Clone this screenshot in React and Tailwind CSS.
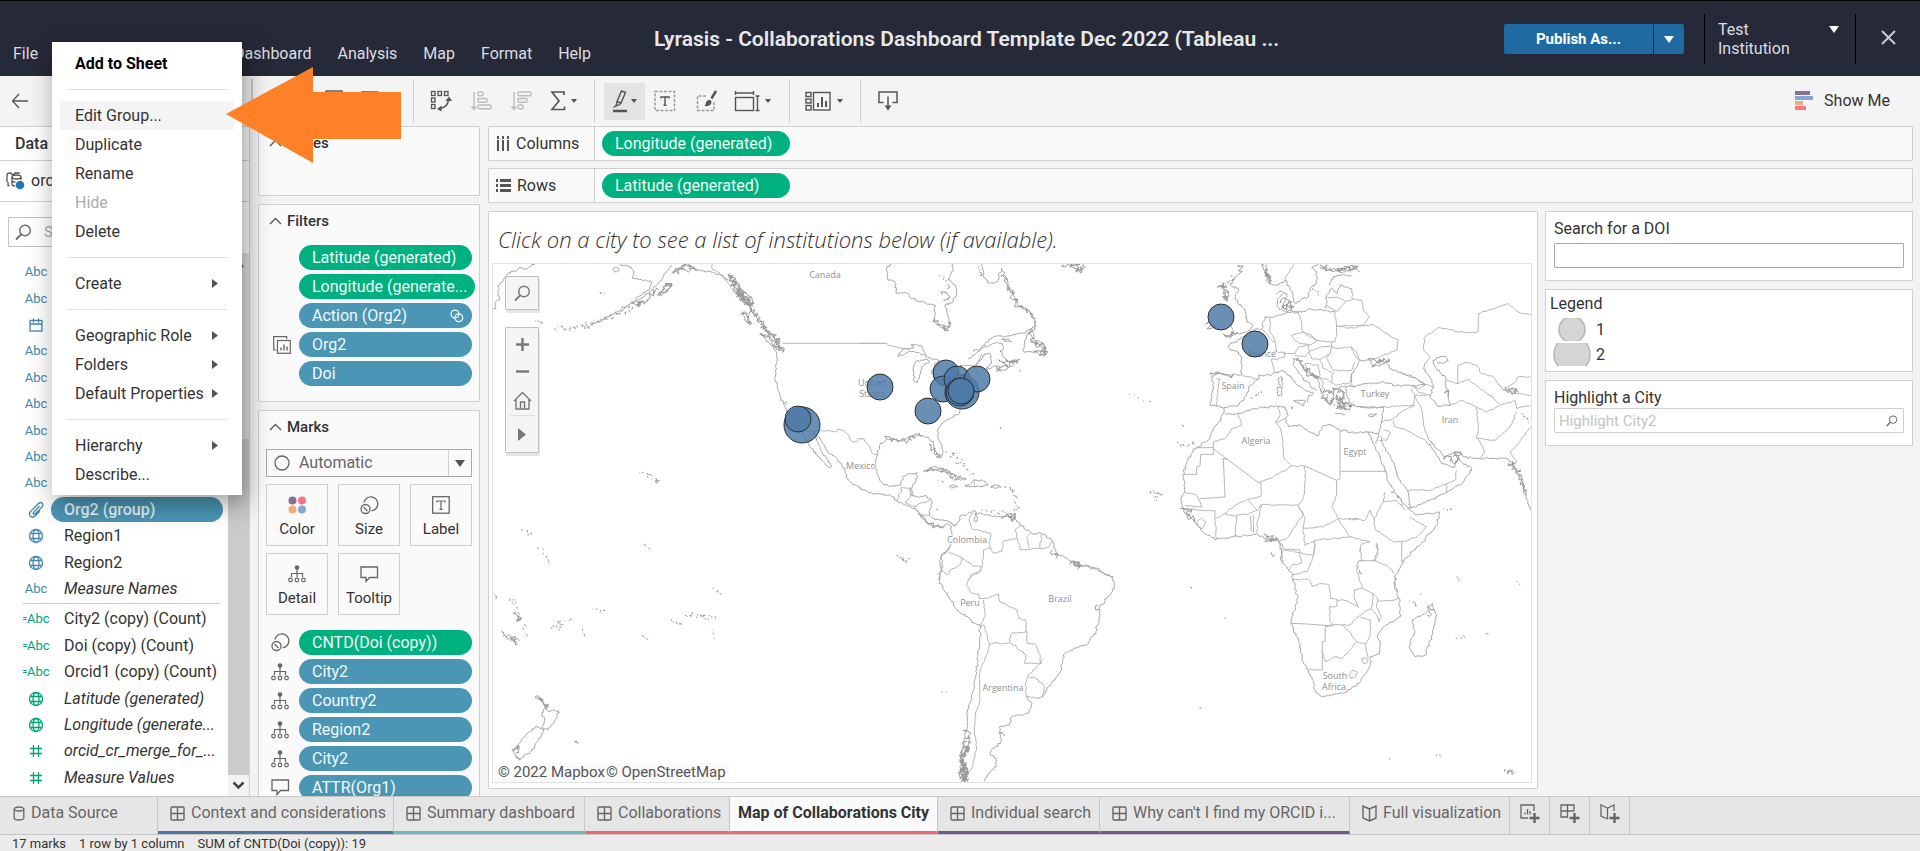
import React from "react";

/* ---------- map geometry ---------- */

function seeded(seed) {
  let s = seed % 2147483647;
  return () => {
    s = (s * 16807) % 2147483647;
    return s / 2147483647 - 0.5;
  };
}

// Turns "x,y x,y" into a path whose segments wander like a real shoreline.
function rough(points, amp, step, seed) {
  const rnd = seeded(seed);
  const pts = points.split(" ").map((p) => p.split(",").map(Number));
  let d = "M" + pts[0].join(" ");
  for (let i = 1; i < pts.length; i++) {
    const [x0, y0] = pts[i - 1];
    const [x1, y1] = pts[i];
    const n = Math.max(1, Math.round(Math.hypot(x1 - x0, y1 - y0) / step));
    for (let k = 1; k < n; k++) {
      const t = k / n;
      d += `L${(x0 + (x1 - x0) * t + rnd() * amp).toFixed(1)} ${(y0 + (y1 - y0) * t + rnd() * amp).toFixed(1)}`;
    }
    d += `L${x1} ${y1}`;
  }
  return d;
}

// Short strokes spread along a line: island chains.
function chain(points, count, spread, seed) {
  const rnd = seeded(seed);
  const pts = points.split(" ").map((p) => p.split(",").map(Number));
  let d = "";
  for (let i = 0; i < count; i++) {
    const f = ((i + 0.5) / count) * (pts.length - 1);
    const a = Math.min(Math.floor(f), pts.length - 2);
    const t = f - a;
    const x = pts[a][0] + (pts[a + 1][0] - pts[a][0]) * t + rnd() * spread;
    const y = pts[a][1] + (pts[a + 1][1] - pts[a][1]) * t + rnd() * spread;
    d += `M${x.toFixed(1)} ${y.toFixed(1)}l${(rnd() * 8 + 2).toFixed(1)} ${(rnd() * 8 + 2).toFixed(1)}l${(rnd() * 6).toFixed(1)} ${(rnd() * 6).toFixed(1)}`;
  }
  return d;
}

const TILES = [
  {
    transform: "translate(490 260) scale(0.33333)",
    coasts: [
      "8,148 18,145 16,125 30,118 25,100 28,85 22,78 38,66 40,58 55,38 80,32 90,22 110,28 125,14 135,12",
      "368,28 380,22 388,30 375,36 368,28",
      "392,12 410,18 425,22 430,40 428,55 445,58 470,62 485,65 480,85 455,105 430,125 395,150 360,165 330,185 300,192",
      "395,145 450,118 480,95 505,70 520,50 530,35 545,15",
      "510,105 520,85 535,75 545,72 530,95 515,105",
      "545,40 570,22 590,14 610,25 635,33 660,35 690,45 715,60",
      "757,155 775,160 780,195 765,180 757,155",
      "812,220 830,225 860,250 878,270 865,270 835,245 812,220",
      "850,255 860,280 862,300 857,330 854,355 862,380 870,410 880,430 890,455 900,490 930,510 945,530 950,545 960,560 985,590 1005,610 1015,622 1025,618 1015,600 995,575 985,550 970,520 990,535 1010,570 1040,595 1065,625 1070,655 1090,675 1115,685",
      "1205,12 1190,25 1193,60 1215,65 1218,98 1250,100 1275,120 1310,130 1335,135 1332,180 1345,195 1370,212 1380,185 1370,150 1365,135 1385,130 1400,105 1395,75 1375,60 1390,30 1388,12",
      "472,640 480,644 488,650",
      "498,655 508,662 502,670 498,655",
    ],
    borders: ["667,12 667,28 690,40 715,70 735,100 770,125 790,160", "930,510 960,515 990,512 1040,515 1042,508 1060,510 1075,525 1085,545 1100,545 1105,535 1118,537"],
    straight: ["878,250 1187,250"],
    dense: [
      "555,35 575,18 600,14 615,28 575,30 555,38",
      "510,105 520,80 545,70 530,92 512,108",
      "722,40 735,70 750,90 765,110 780,135 745,100 728,70 720,45",
      "735,75 755,105 780,120 765,130 740,95 755,92 778,125 790,140",
      "725,50 748,80 770,100 785,130 760,120 742,90",
      "782,120 790,160 810,185 830,210 850,230 870,250 878,278",
      "785,150 805,180 825,205 845,225 872,245",
      "758,158 772,170 780,195 764,180",
      "815,222 840,240 865,262 878,275",
      "430,130 455,125 440,135 470,122 480,105 505,90",
      "1358,105 1370,100 1372,120 1360,122",
      "1335,175 1350,195 1370,210 1375,185",
    ],
    islands: [["245,203 300,192 360,170 430,140", 46, 12], ["195,200 240,205", 8, 10], ["140,180 155,186", 4, 6], ["450,632 505,665", 7, 10], ["330,95 345,105", 3, 6], ["1352,38 1382,90", 7, 10], ["872,420 885,430", 3, 8]],
  },
  {
    transform: "translate(860 320) scale(0.33333)",
    coasts: [
      "54,405 48,425 50,460 65,488 88,500 122,495 130,468 145,462 172,458 168,482 155,505 157,528 175,530 200,528 215,542 208,585 225,600 255,602 270,605 285,618",
      "54,405 58,378 80,358 100,357 130,362 148,350 180,346 205,352 220,370 222,390 240,415 247,408 246,380 235,355 233,330 245,310 275,292 298,280 300,268",
      "0,503 30,518 75,525 90,524 112,545 140,555 165,565 185,590 205,612 240,625 262,610 275,620",
      "192,455 225,438 250,445 275,460 318,478 280,478 262,460 230,450 205,450 192,455",
      "315,498 335,490 340,480 375,483 385,495 360,500 335,500 315,498",
      "268,500 280,495 293,500 280,505 268,500",
      "393,498 415,496 424,502 393,503 393,498",
      "285,620 300,600 300,590 325,580 345,572 348,585 342,600 350,605 352,590 345,580 365,580 400,590 430,590 465,590 470,605 482,615 510,635 520,642 545,640 570,655 578,665 590,700 620,715 650,735 680,740 710,748 740,765 760,770",
      "275,620 275,635 278,660 265,690 245,705 240,730 245,750 237,780",
      "325,118 355,95 375,70 400,50 440,48 490,40 525,20 525,0",
      "350,135 375,100 390,100 395,130 380,148 395,142 420,140 410,155 435,150 480,118 450,125 430,110 420,90",
      "340,95 365,85 400,70 425,68 430,85 420,95",
      "425,58 445,56 455,66 440,64 425,58",
      "490,95 495,60 515,25 522,40 520,60 550,70 558,105 525,97 490,95",
      "112,107 135,85 160,85 155,72 185,78 200,108 165,97 145,95 130,106 112,107",
      "165,185 160,150 168,125 195,118 208,125 185,140 178,170 172,187 165,185",
      "200,112 215,118 240,122 225,130 215,160 235,190",
    ],
    borders: [
      "0,355 12,357 25,375 40,402 54,405",
      "112,545 118,520 125,515 122,503 152,503 157,528",
      "150,505 152,530 135,548 165,560 180,550 212,542",
      "162,562 185,585 210,585",
      "340,578 328,595 335,625 370,635 392,640 390,680 400,700 425,695 430,680 428,665 470,655",
      "482,615 465,630 470,650 482,690 540,685 565,682 578,665",
      "512,640 500,655 510,685",
      "545,642 540,685",
      "390,685 370,690 368,735 360,755 340,765 325,780",
      "265,695 305,712 300,735 270,750 262,765 245,750",
      "305,712 340,738 368,740",
      "345,480 345,500",
    ],
    straight: ["0,70 80,70 85,75 125,85 148,88", "300,137 345,137 360,115 365,100"],
    dense: ["185,590 215,612 245,622", "215,375 230,400 242,412", "430,588 465,590 462,600 445,592", "578,690 590,705 588,715", "645,725 660,740 652,748", "518,65 530,75 552,72 545,90 558,100", "420,125 470,120 440,140 412,150", "80,358 110,356 145,362 148,350 185,347", "205,450 235,448 260,460 300,475"],
    islands: [["262,395 290,410 300,432 345,462", 20, 16], ["440,502 462,515 468,560 462,585", 20, 10], ["365,568 400,575 440,572", 9, 8], ["115,712 140,722", 10, 14], ["805,220 872,250", 5, 8], ["870,515 900,520", 4, 6], ["478,150 480,152", 1, 2], ["235,485 250,480", 2, 5], ["420,320 422,322", 1, 1], ["228,565 230,570", 1, 2]],
  },
  {
    transform: "translate(960 260) scale(0.36990 0.33333)",
    coasts: ["60,12 62,50 80,70 100,65 112,25 130,70 145,105 155,135 185,150 200,175 205,200 195,215"],
    borders: [],
    dense: ["280,14 300,16 330,35 335,14 300,14 320,30 334,20", "118,45 130,75 140,100 150,130 180,148 200,175", "195,215 190,240 225,265 230,285 200,278"],
    islands: [["515,695 540,700 525,718", 8, 10], ["590,550 610,560 635,545", 9, 8], ["600,492 605,498", 2, 4], ["55,20 58,50", 5, 8]],
  },
  {
    transform: "translate(1170 262) scale(0.33333)",
    coasts: [
      "290,8 290,40 300,65 320,72 345,55 358,75 370,100 370,115 378,125 395,110 415,105 420,80 440,60 440,35 425,15 445,8",
      "320,95 335,88 350,95 345,115 335,140 350,150 360,145 385,150 395,150 420,140 460,145 495,148",
      "385,150 350,152 325,160 305,165 285,165 275,200 250,205 240,222 215,225 200,240 175,250 180,262 205,270 215,290 215,338 180,338 140,335 125,345 130,365 125,400 120,430 148,432 160,438 185,432 205,430 230,400 235,375 265,352 265,340 300,340 335,325 350,335 375,360 400,380 430,395 415,400 412,420",
      "440,385 420,370 400,350 385,330 370,310 370,290 385,290 390,305 410,330 440,350 450,370 455,395 465,410 480,430 492,410 490,385 515,375 540,372",
      "468,140 470,100 485,80 500,95 510,70 545,80",
      "480,70 485,50 500,40 545,42",
      "450,15 480,25 520,30 560,15 570,30",
      "545,365 545,340 570,295 600,295 605,308 625,312 650,298 660,320 700,335 740,350 765,370 725,370 680,370 635,360 595,365 560,372 540,370",
      "530,375 530,400 545,430 600,438 640,435 635,480 625,525 618,545",
      "770,300 760,320 780,345 790,375 780,405 800,430 840,430 835,400 825,365 830,350 800,320 790,300 800,285 830,285 835,295 815,305 800,300",
      "165,455 205,455 250,440 320,432 345,435 355,460 345,470 355,495 390,490 420,510 445,522 455,495 480,488 510,505 560,512 600,512 625,515",
      "165,440 150,475 130,500 115,535 75,560 50,600 38,640 45,690 32,712 40,745 70,775 100,810 140,832 190,825 260,815 290,832 325,835 335,870 340,900",
      "775,530 800,560 825,585 870,568 880,585 930,590 1005,588 1025,600 1040,635 1055,640 1060,680 1082,745",
      "770,538 795,570 815,605 855,615 865,580 875,600 905,620 880,660 830,690 780,715 720,740 715,690 685,650 670,600 640,550 632,522",
      "595,510 615,555 645,620 650,650 680,700 720,745 740,760 808,750 800,790 750,850 695,900",
      "190,75 205,80 195,110 225,145 230,180 250,190 240,205 205,215 165,225 190,212 180,190",
      "195,80 182,70 195,45 215,30",
      "325,350 335,345 338,365 328,370 325,350",
      "322,375 338,375 335,400 325,402 322,375",
      "370,415 405,415 400,432 370,415",
      "495,455 525,458",
      "595,460 620,455 610,464 595,460",
      "340,95 325,110 320,130 330,145",
    ],
    borders: [
      "345,55 350,40 362,20 370,8",
      "468,107 500,105 530,118 548,112 545,80",
      "468,130 500,148 530,118",
      "548,112 575,115 580,145 598,165 580,190 550,198 500,193",
      "385,150 395,180 397,210 425,220 440,235 470,240 495,240 500,210 495,150",
      "500,193 580,190 610,188 640,210 685,235 680,265 630,285 600,295",
      "570,295 560,270 545,255 510,258 485,255 485,240",
      "545,255 555,280 568,295",
      "365,220 400,210 440,235 425,248 395,245 375,235 365,220",
      "340,275 375,275 385,255 415,250 418,270 405,285 375,280",
      "418,270 445,258 485,250 480,275 450,292 425,290 418,270",
      "300,165 300,210 315,235 320,265 305,270 345,270 345,285 320,292 305,290",
      "275,200 290,215 305,235 315,240",
      "305,290 312,330",
      "480,275 470,290 490,325 545,325 555,300",
      "490,330 485,360 500,370 540,362 545,335",
      "450,292 460,320 485,330",
      "405,305 445,310 450,340 435,350 410,320 405,305",
      "450,345 460,365 455,385",
      "440,350 470,350 485,365",
      "140,350 150,352 145,380 140,430",
      "215,338 265,352",
      "540,372 555,375",
      "765,370 745,380 725,372",
      "725,380 735,400 770,400",
      "700,335 740,350 760,362 790,375",
      "735,370 745,390 780,400",
      "560,435 640,435 730,430 735,400",
      "770,300 780,285 760,260 765,225 805,197 850,205 880,212 925,210 925,155 1015,125 1045,150 1082,158",
      "863,312 890,300 920,310 935,335 970,345 1000,385 1035,360 1045,345 1082,345",
      "830,355 863,365 895,352 925,375 960,400 985,425",
      "1000,385 1020,380 1040,395 1082,400",
      "840,430 875,415 920,435 950,450 990,430 1035,415 1040,440 1082,430",
      "920,435 925,495 920,530 975,535 1020,495 1040,450",
      "925,530 945,570 930,590",
      "1082,495 1045,545 1020,570 1040,600",
      "735,400 755,445 760,490 775,530",
      "205,455 215,490 185,500 165,530 130,540",
      "345,470 318,480 335,510 342,590 365,612 300,650 265,662",
      "325,432 330,460 318,480",
      "635,480 670,470 700,445 735,430",
      "670,475 675,495 700,500 770,538",
      "628,535 650,535 660,510 640,505",
      "715,685 780,685 830,665 855,655 860,625",
      "830,665 830,690",
      "645,690 640,720 680,715 705,745",
      "640,720 612,770 615,800 670,840 700,838 740,825 770,795 720,765",
      "505,770 550,770 585,775 600,745 612,770",
      "505,770 540,825 600,840",
      "500,700 485,735 505,770 460,795 400,798 405,770 385,730",
      "405,612 405,660 400,710 385,730 330,728 275,728 262,745 232,712",
      "365,612 405,612",
      "265,662 275,665 272,703 232,712 195,730 165,755",
      "400,798 405,850 435,835 540,825",
      "385,730 400,755 370,800 350,830 330,835",
      "435,835 430,880 340,862",
      "262,812 262,780 275,728",
      "245,810 240,760",
      "252,812 250,760",
      "197,825 200,760 232,758 262,745",
      "140,830 135,770 165,755 200,765",
      "45,740 100,745 135,745 135,770",
      "45,690 80,700 95,735 45,730",
      "80,780 95,768 108,780 98,800 85,795 80,780",
      "600,840 575,845 570,870",
      "620,842 622,870 610,900",
      "570,860 575,900",
    ],
    straight: ["78,557 130,557", "863,365 863,312", "695,900 695,838", "130,540 130,577 92,577 90,612 80,615 80,637 38,637", "130,560 265,662", "160,590 165,705 90,710", "155,590 172,592", "405,612 500,655 510,650 510,505", "512,628 648,628", "500,655 500,700"],
    dense: [
      "283,10 288,30 298,50 300,62 290,40 286,20",
      "148,70 160,62 162,85 175,95 160,105 172,118 158,80",
      "335,120 350,112 365,120 372,135 350,138 340,128 360,130",
      "385,290 400,310 420,330 440,350 400,320",
      "455,10 480,22 510,18 540,22 565,12 500,26",
      "600,295 620,300 655,290 640,300 610,308",
      "465,380 480,395 500,380 520,390 510,410 530,420 520,440 545,430",
      "460,400 480,425 500,400 515,420 500,440 530,435",
      "115,180 120,200 140,195",
      "35,740 60,745 50,760 70,775",
      "165,222 190,215 205,213",
      "1010,385 1040,380 1045,390 1015,392",
      "1040,600 1015,610 1040,620 1050,640",
      "825,585 860,600 868,572 850,585",
      "1055,640 1060,680 1068,700",
      "210,12 216,30",
      "125,340 150,335 190,340",
      "290,830 325,835",
      "830,385 838,400",
    ],
    islands: [["245,405 275,388", 6, 8], ["665,690 715,735", 6, 12], ["820,742 848,740", 4, 5], ["430,80 445,95", 4, 10], ["308,870 305,885", 3, 6], ["470,400 545,430", 26, 36], ["365,430 370,435", 2, 6], ["540,770 560,770", 3, 5], ["1060,450 1075,480", 5, 12], ["190,45 145,75", 8, 12]],
  },
  {
    transform: "translate(490 520) scale(0.36990 0.33333)",
    coasts: [
      "1245,80 1220,110 1225,140 1213,160 1215,185 1240,230 1262,270 1325,320 1325,350 1318,430 1310,500 1290,570 1290,620 1275,690 1270,780",
      "1337,785 1345,765 1370,740 1368,715 1352,705 1355,690 1380,670 1378,620 1405,615 1410,590 1455,580 1465,550 1450,530",
      "1475,533 1495,530 1500,515 1545,450 1550,405 1568,392",
      "130,527 150,555 155,572 185,572 182,590 165,620 155,630 140,620 148,600 140,585 150,560 130,527",
      "125,618 145,628 128,665 110,695 78,720 65,700 70,680 100,640 125,618",
    ],
    borders: [
      "1325,320 1335,315 1350,375 1345,400 1325,450 1325,500 1325,540 1312,580 1310,640 1315,680 1305,740 1290,760",
      "1330,150 1300,165 1288,195 1300,218 1322,222 1322,235 1345,235 1375,222 1378,245 1425,270 1430,295 1448,300 1452,340",
      "1335,240 1338,290 1325,320",
      "1405,365 1410,340 1450,335 1452,370 1475,372 1485,400 1490,430 1445,430 1450,405 1405,365",
      "1350,375 1365,368 1385,372 1405,368",
      "1495,415 1490,430 1455,465 1448,490 1450,530 1475,533",
      "1455,470 1475,475 1500,500 1495,530",
    ],
    dense: [
      "1285,630 1300,640 1290,655 1298,670 1280,680 1295,695 1282,705 1275,725 1285,745 1272,760 1285,785",
      "1290,665 1285,690 1295,680 1280,715",
      "1275,730 1288,735 1272,750 1290,760 1275,770 1290,780 1275,783",
      "1278,740 1282,783 1288,745 1284,785 1276,740",
      "1280,690 1276,720 1284,740 1278,780",
      "128,527 145,550 158,560 150,565",
      "65,695 80,680 70,700",
      "75,715 82,718",
      "38,340 75,372",
      "62,350 80,362",
      "70,275 82,300 74,290",
      "235,662 240,670",
      "1385,640 1392,648",
    ],
    islands: [["60,230 72,270 95,340", 14, 12], ["40,345 75,372", 8, 10], ["175,318 210,305", 14, 24], ["10,215 18,230", 4, 6], ["130,75 165,135", 6, 8], ["85,30 120,40", 4, 10], ["275,265 310,272", 4, 5], ["490,298 515,315", 5, 6], ["530,282 610,295", 14, 12], ["605,205 625,225", 4, 6], ["250,325 258,355", 3, 5], ["410,345 428,358", 2, 6], ["602,320 605,360", 3, 4], ["1215,517 1237,518", 2, 2], ["410,65 435,90", 2, 2]],
  },
  {
    transform: "translate(1070 520) scale(0.36990 0.33333)",
    coasts: [
      "0,122 20,130 55,140 75,145 100,165 115,170 120,195 115,215 80,260 78,300 70,335 45,375 10,385 0,392",
      "525,40 545,60 565,60 575,80 570,120 600,160 605,185 615,225 615,245 600,290 597,310 620,370 630,430 645,450 655,480 665,515 680,530 740,520 770,500 800,460 812,430 812,410 838,400 838,370 832,345 850,320 893,290 893,270 888,235 878,200 880,165 905,120",
      "980,250 992,285 975,360 960,405 935,410 918,385 920,365 932,335 925,300 965,275 980,250",
    ],
    borders: [
      "575,87 620,88 625,130 600,135 590,155",
      "665,70 655,115 640,155 600,165",
      "600,178 645,178 655,200 675,190 700,195 705,235 722,238 722,258 702,260 702,300 712,315",
      "790,120 778,125 775,150 790,205 768,210 770,240 780,262 750,242 722,240",
      "790,205 820,220 815,265 785,285 755,315 735,315",
      "820,220 832,235 830,265 842,290 835,305 825,280 815,268",
      "832,243 860,242 890,236",
      "825,122 860,140 878,160",
      "832,72 832,100 825,122",
      "785,290 812,300 812,345 800,370 775,365 755,335 735,315 712,315 690,320",
      "682,450 660,450 645,445",
      "682,390 690,425 715,410 735,415 775,368",
      "800,370 805,415",
    ],
    straight: ["597,310 640,312 712,318", "690,320 690,365 682,365 682,450", "782,122 828,122", "789,415 798,414 806,422 800,432 791,428 789,415", "754,465 765,450 777,458 770,472 760,475 754,465"],
    dense: ["5,125 20,130 15,140 25,138", "972,255 982,270 965,285", "75,255 80,268", "535,52 560,58"],
    islands: [["918,240 938,258", 5, 6], ["1042,355 1065,345", 3, 5], ["545,92 550,108", 2, 4], ["1205,182 1217,195", 2, 2], ["1044,162 1052,190", 2, 2], ["328,200 330,202", 1, 1], ["417,292 419,294", 1, 1], ["350,565 351,566", 1, 1], ["990,700 1008,708", 3, 4], ["862,714 863,716", 1, 1], ["1124,340 1125,341", 1, 1], ["1180,750 1195,758", 16, 12], ["878,165 884,215", 6, 6], ["950,220 951,222", 1, 1], ["775,135 785,160", 5, 6]],
  },
];

const LABELS = [
  [825, 278, "Canada"], [872, 386, "United"], [872, 397, "States"], [861, 469, "Mexico"], [967, 543, "Colombia"], [970, 606, "Peru"],
  [1060, 602, "Brazil"], [1003, 691, "Argentina"], [1335, 679, "South"], [1334, 690, "Africa"], [1256, 444, "Algeria"],
  [1355, 455, "Egypt"], [1375, 397, "Turkey"], [1450, 423, "Iran"], [1233, 389, "Spain"], [1262, 357, "France"],
];

const MARKS = [
  [880, 387, 13], [802, 425, 18], [798, 419, 13], [928, 411, 13], [946, 373, 13], [943, 389, 13], [962, 392, 17],
  [957, 379, 13], [977, 379, 13], [960, 392, 14], [961, 391, 13], [1221, 317, 13], [1255, 344, 13],
];

function WorldMap() {
  return (
    <svg className="absolute inset-0 h-full w-full" viewBox="493 264 1038 518" preserveAspectRatio="xMinYMin slice" role="img" aria-label="Map of collaborations by city">
      {TILES.map((t, ti) => (
        <g key={ti} transform={t.transform} fill="none" strokeLinejoin="round">
          {t.borders.map((p, i) => <path key={"b" + i} d={rough(p, 4, 7, ti * 97 + i * 13 + 5)} stroke="#b6b6b6" vectorEffect="non-scaling-stroke" />)}
          {(t.straight || []).map((p, i) => <polyline key={"s" + i} points={p} stroke="#b6b6b6" vectorEffect="non-scaling-stroke" />)}
          {t.coasts.map((p, i) => <path key={"c" + i} d={rough(p, 6, 5, ti * 61 + i * 17 + 3)} stroke="#a6a6a6" vectorEffect="non-scaling-stroke" />)}
          {t.dense.map((p, i) => <path key={"d" + i} d={rough(p, 18, 4, ti * 41 + i * 29 + 7)} stroke="#999" vectorEffect="non-scaling-stroke" />)}
          {t.islands.map((a, i) => <path key={"i" + i} d={chain(a[0], a[1], a[2], ti * 31 + i * 19 + 11)} stroke="#999" vectorEffect="non-scaling-stroke" />)}
        </g>
      ))}
      <g className="font-['Open_Sans',sans-serif]" fontSize="9" fontWeight="500" fill="#8f8f8f" stroke="#fff" strokeWidth="2" paintOrder="stroke" textAnchor="middle">
        {LABELS.map(([x, y, t]) => <text key={t} x={x} y={y}>{t}</text>)}
      </g>
      {MARKS.map(([x, y, r], i) => <circle key={i} cx={x} cy={y} r={r} fill="#4e79a7" fillOpacity="0.84" stroke="#2b2f36" />)}
    </svg>
  );
}

/* ---------- icons ---------- */

const Svg = ({ w, h, children, className = "", ...rest }) => (
  <svg width={w} height={h} viewBox={`0 0 ${w} ${h}`} fill="none" stroke="currentColor" aria-hidden="true" className={"flex-none " + className} {...rest}>{children}</svg>
);
const Caret = ({ className = "" }) => <Svg w={8} h={6} className={className} stroke="none" fill="currentColor"><path d="M1 1h6L4 5z" /></Svg>;
const BackIcon = () => <Svg w={17} h={16} strokeWidth="1.3"><path d="M8 1 1.500 8 8 15M2 8h15" /></Svg>;
const SearchIcon = ({ size = 17 }) => <svg width={size} height={size} viewBox="0 0 17 17" fill="none" stroke="currentColor" strokeWidth="1.4" aria-hidden="true" className="flex-none"><circle cx="10" cy="6.500" r="5.300" /><path d="M6.200 10.300 1 15.500" strokeWidth="1.800" /></svg>;
const SwapIcon = () => (
  <Svg w={23} h={22} strokeWidth="1.3">
    <rect x="1.500" y="1.500" width="3.500" height="4" /><rect x="8" y="1.500" width="3.500" height="4" /><rect x="14.500" y="1.500" width="3.500" height="4" /><rect x="1.500" y="8" width="3.500" height="4" /><rect x="1.500" y="14.500" width="3.500" height="4" />
    <path d="M18.500 9c0 6-4 9-9.500 10" strokeWidth="1.500" /><path d="m15.500 11 3.500-4.500 3 4.500zM11.500 15.500 7 19l4.500 2.500z" fill="currentColor" stroke="none" />
  </Svg>
);
const SortIcon = ({ widths }) => (
  <Svg w={23} h={22} strokeWidth="1.4">
    <path d="M4 2v16" /><path d="M.5 16.500h7L4 20.500z" fill="currentColor" stroke="none" />
    {widths.map((w, i) => <rect key={i} x="8" y={2 + i * 6.5} width={w} height="3.800" rx="1" />)}
  </Svg>
);
const SigmaIcon = () => <Svg w={16} h={22} strokeWidth="1.7"><path d="M14 5V2H2l7 9-7 8.500h12.500v-3" /></Svg>;
const PenIcon = () => (
  <Svg w={16} h={24} strokeWidth="1.4">
    <path d="M9.500 2 13.500 3.500 9 14 5 12.500zM5 12.500l-1 4.500 3-1 2-2M1.500 18.500l2-1.500" /><path d="M1 22h14" strokeWidth="2.500" />
  </Svg>
);
const TextBoxIcon = () => (
  <Svg w={22} h={22}><rect x="1" y="1.500" width="19.500" height="19" strokeWidth="1.500" stroke="#9a9a9a" strokeDasharray="3 1.500" /><path d="M7 8.500V7h8v1.500M11 7v8M9.500 15.300h3" strokeWidth="1.400" /></Svg>
);
const BrushIcon = () => (
  <Svg w={21} h={22}><path d="M10 6H1.500v14.500H18V11" strokeWidth="1.500" stroke="#9a9a9a" strokeDasharray="3 1.500" /><path d="M20 1 15.500 8.500" strokeWidth="2.500" /><path d="M8.500 16c1.500-1 1-5.500 4.500-6 2.500 0 3 2 2 4-1 1.500-3.500 2.500-6.500 2z" fill="currentColor" stroke="none" /></Svg>
);
const FitIcon = () => (
  <Svg w={26} h={22} strokeWidth="1.400"><path d="M1.500 1v4M19.500 1v4M1.500 3h18M21.500 6h4M21.500 20.500h4M23.500 6v14.500" /><rect x="1.500" y="7.500" width="18" height="13" /></Svg>
);
const CardsIcon = () => (
  <Svg w={26} h={21} strokeWidth="1.400"><rect x="1" y="1.500" width="5" height="4" /><rect x="1" y="8" width="5" height="4" /><rect x="1" y="14.500" width="5" height="4.500" /><rect x="8.500" y="1.500" width="16.500" height="17.500" /><path d="M13 16v-4M17 16V6M21 16v-6" strokeWidth="2" /></Svg>
);
const DownloadIcon = () => <Svg w={22} h={22} strokeWidth="1.500"><path d="M6.500 12.500H2V2h18v10.500h-4.500M11 6.500V17" /><path d="M7.500 15.500h7L11 20.500z" fill="currentColor" stroke="none" /></Svg>;
const ShowMeIcon = () => (
  <Svg w={19} h={20} stroke="none"><path fill="#8a7099" d="M0 0h15v4H0z" /><path fill="#85a7cf" d="M0 5h18v4H0z" /><path fill="#f2a97e" d="M0 10h8v4H0z" /><path fill="#fb7583" d="M0 15h11v4H0z" /></Svg>
);
const DatabaseIcon = () => (
  <Svg w={19} h={18} strokeWidth="1.300"><path d="M3.500 13.500H2V10M1 10V3c0-1.500 1.500-2 3-2h1l1 1.500h2L9 1h4v1" /><ellipse cx="10.500" cy="5" rx="4.500" ry="2" /><path d="M6 5v7c0 1.500 1.500 2 3 2M15 5v3M6 9c1 1 2 1.300 3.500 1.300" /><circle cx="14" cy="13" r="4.300" fill="#2478b5" stroke="none" /></Svg>
);
const GlobeIcon = () => <Svg w={16} h={16} strokeWidth="1.300"><circle cx="8" cy="8" r="6.500" /><ellipse cx="8" cy="8" rx="3" ry="6.500" /><path d="M2.200 5.500h11.600M2.200 10.500h11.600" /></Svg>;
const CalendarIcon = () => <Svg w={14} h={14} strokeWidth="1.300"><rect x="1" y="2.500" width="12" height="10.500" /><path d="M1 6h12M4.500.5v4M9.500.5v4" /></Svg>;
const ClipIcon = () => <Svg w={17} h={17} strokeWidth="1.300"><path d="m11.500 5-6 6.500c-1 1 .5 2.500 1.500 1.500L14 6c2.500-3-1-6-3.500-3.500L2.500 10.500c-3 3.500 1.500 7.500 4.500 4.500l5-5" /></Svg>;
const HashIcon = () => <Svg w={14} h={14} strokeWidth="1.300"><path d="M4.500 1v12M9.500 1v12M1 4.500h12M1 9.500h12" /></Svg>;
const SizeIcon = () => <Svg w={19} h={19} strokeWidth="1.300"><circle cx="5.500" cy="13" r="4.500" /><path d="m3.500 11 4 4" /><path d="M4 6.500a7 7 0 1 1 7.500 8.300" /></Svg>;
const DetailIcon = () => (
  <Svg w={18} h={18} strokeWidth="1.200"><circle cx="9" cy="2.500" r="2.300" fill="currentColor" stroke="none" /><path d="M9 4v8M3.500 12V8.500h11V12" /><circle cx="2.500" cy="15" r="1.800" /><circle cx="9" cy="15" r="1.800" /><circle cx="15.500" cy="15" r="1.800" /></Svg>
);
const BubbleIcon = () => <Svg w={19} h={17} strokeWidth="1.300"><path d="M1 1h16.500v10.500H9.500L6 15.500v-4H1z" /></Svg>;
const LabelIcon = () => <Svg w={18} h={18}><rect x=".7" y=".7" width="16.500" height="16.500" strokeWidth="1.300" /><path d="M5 6.500V5h8v1.500M9 5v8M7.500 13.300h3" strokeWidth="1.200" /></Svg>;
const ColorIcon = () => <Svg w={19} h={18} stroke="none"><circle cx="4.500" cy="4.500" r="4" fill="#8a7099" /><circle cx="14" cy="4.500" r="4" fill="#fb7583" /><circle cx="4.500" cy="13.500" r="4" fill="#f2a97e" /><circle cx="14" cy="13.500" r="4" fill="#85a7cf" /></Svg>;
const ContextIcon = () => <Svg w={18} h={18} strokeWidth="1.200"><path d="M3.500 14H.7V.7h13V3" /><rect x="4.500" y="4.500" width="12.800" height="12.800" /><path d="M8 14.500v-3M11 14.500v-6M14 14.500v-4" strokeWidth="1.400" /></Svg>;
const SetIcon = () => <Svg w={14} h={14} strokeWidth="1.300"><circle cx="5" cy="5" r="3.900" /><circle cx="8.800" cy="8.800" r="3.900" /></Svg>;
const GridIcon = () => <Svg w={15} h={15} strokeWidth="1.400"><rect x="1" y="1" width="13" height="13" rx="1" /><path d="M7.500 1v13M1 7.500h13" /></Svg>;
const BookIcon = () => <Svg w={15} h={17} strokeWidth="1.400"><path d="M7.500 4 1 1v12l6.500 3L14 13V1zM7.500 4v12" /></Svg>;
const CylinderIcon = () => <Svg w={12} h={15} strokeWidth="1.300"><ellipse cx="6" cy="3" rx="4.800" ry="2" /><path d="M1.200 3v9c0 1.100 2.100 2 4.800 2s4.800-.9 4.800-2V3" /></Svg>;
const Plus = ({ children }) => <Svg w={20} h={19} strokeWidth="1.300">{children}<path d="M14.500 9v10M9.500 14h10" strokeWidth="2.400" /></Svg>;
const Chevron = () => <Svg w={13} h={8} strokeWidth="1.300" className="text-[#555]"><path d="m1 7 5.500-5.500L12 7" /></Svg>;

/* ---------- data ---------- */

const FIELDS = [
  ["abc"], ["abc"], ["cal"], ["abc"], ["abc"], ["abc"], ["abc"], ["abc"], ["abc"],
  ["clip", "Org2 (group)", "selected"], ["globe", "Region1"], ["globe", "Region2"], ["abc", "Measure Names", "italic"],
];
const MEASURES = [
  ["calc", "City2 (copy) (Count)"], ["calc", "Doi (copy) (Count)"], ["calc", "Orcid1 (copy) (Count)"], ["globe", "Latitude (generated)", "italic"],
  ["globe", "Longitude (generate...", "italic"], ["hash", "orcid_cr_merge_for_...", "italic"], ["hash", "Measure Values", "italic"],
];
const MENU = [
  [["Add to Sheet", "bold"]],
  [["Edit Group...", "active"], ["Duplicate"], ["Rename"], ["Hide", "disabled"], ["Delete"]],
  [["Create", "sub"]],
  [["Geographic Role", "sub"], ["Folders", "sub"], ["Default Properties", "sub"]],
  [["Hierarchy", "sub"], ["Describe..."]],
];
const TABS = [
  ["Context and considerations", "w-[236px]", "border-b-[#51779f]"],
  ["Summary dashboard", "w-[191px]", "border-b-[#72b8b8]"],
  ["Collaborations", "w-[145px]", "border-b-[#f2647a]"],
  ["Map of Collaborations City", "w-[208px]", "border-b-[#f2647a]"],
  ["Individual search", "w-[162px]", "border-b-[#6f5b85]"],
  ["Why can't I find my ORCID i...", "w-[250px]", "border-b-[#6f5b85]"],
];

/* ---------- parts ---------- */

function Field({ kind, name, state }) {
  const icon = {
    abc: <span className="text-[13px]">Abc</span>,
    calc: <span className="flex items-center text-[13px]"><span className="text-[8px] font-bold">=</span>Abc</span>,
    cal: <CalendarIcon />, clip: <ClipIcon />, globe: <GlobeIcon />, hash: <HashIcon />,
  }[kind];
  return (
    <li className="flex min-h-0 flex-1 items-center">
      <span className="flex w-[51px] flex-none justify-end"><span className="flex w-[30px] justify-center">{icon}</span></span>
      {name && (
        <span className={state === "selected" ? "flex h-[25px] w-[172px] items-center rounded-full bg-[#4b96b4] pl-[13px] font-medium text-[#e6f1f5]" : state === "italic" ? "pl-[13px] italic text-[#333]" : "pl-[13px] text-[#333]"}>{name}</span>
      )}
    </li>
  );
}

function Pill({ children, green, icon, trailing }) {
  return (
    <li className="flex items-center">
      <span className="flex w-[40px] flex-none items-center pl-[12px] text-[#666]">{icon}</span>
      <button className={"flex h-[25px] flex-1 items-center justify-between rounded-full px-[13px] text-left " + (green ? "bg-[#00b180] text-[#f2fbf8]" : "bg-[#4b96b4] text-[#f2f8fa]")}>
        <span className="whitespace-nowrap">{children}</span>
        <span className="-mr-[5px] flex">{trailing}</span>
      </button>
    </li>
  );
}

function Card({ title, children, className = "" }) {
  return (
    <section className={"rounded-[1px] border border-[#d0d0d0] bg-[#fafafa] " + className}>
      <h2 className="flex h-8 items-center gap-[5px] pl-[10px] text-[15px] font-medium text-[#333]"><Chevron />{title}</h2>
      {children}
    </section>
  );
}

const MarkButton = ({ icon, children }) => (
  <button className="flex h-[62px] flex-col items-center justify-end gap-[4px] border border-[#d0d0d0] bg-[#fafafa] pb-[6px] text-[15px] leading-5 text-[#333]"><span className="flex h-[20px] items-center text-[#666]">{icon}</span>{children}</button>
);

function Shelf({ label, icon, pill }) {
  return (
    <div className="flex h-[35px] flex-none items-center rounded-[1px] border border-[#d0d0d0] bg-[#fafafa]">
      <div className="flex w-[106px] items-center gap-[6px] self-stretch border-r border-[#d0d0d0] pl-[7px] text-[#333]">{icon}{label}</div>
      <button className="ml-[7px] flex h-[25px] w-[188px] items-center rounded-full bg-[#00b180] pl-[13px] text-[#f2fbf8]">{pill}</button>
    </div>
  );
}

function Tool({ label, children, className = "" }) {
  return <button aria-label={label} className={"flex h-[37px] flex-none items-center justify-center gap-1 " + className}>{children}</button>;
}

const Sep = () => <div className="my-[3px] w-px flex-none bg-[#d0d0d0]" />;

/* ---------- page ---------- */

export default function App() {
  return (
    <div className="relative flex h-screen min-h-[600px] flex-col overflow-hidden bg-[#f3f3f3] font-['Roboto',sans-serif] text-[16px] leading-5 text-[#333]">
      <header className="flex h-[76px] flex-none border-t border-black bg-[#262938] text-[#dcdde0]">
        <nav className="flex w-[654px] flex-none items-start gap-[26px] pl-[13px] pt-[43px]">
          <button>File</button>
          <button className="ml-[170px]">Dashboard</button>
          {["Analysis", "Map", "Format", "Help"].map((m) => <button key={m}>{m}</button>)}
        </nav>
        <h1 className="min-w-0 flex-1 truncate pt-[24px] text-[21px] font-semibold leading-7 text-[#e8e8e8]">Lyrasis - Collaborations Dashboard Template Dec 2022 (Tableau ...</h1>
        <div className="mt-[23px] flex h-[30px] flex-none gap-px text-white">
          <button className="w-[149px] rounded-l-[2px] bg-[#1f6ba1] text-[15px] font-bold">Publish As...</button>
          <button aria-label="More publish options" className="flex w-[30px] items-center justify-center rounded-r-[2px] bg-[#1f6ba1]"><Svg w={10} h={7} stroke="none" fill="currentColor"><path d="M0 0h10L5 7z" /></Svg></button>
        </div>
        <button className="ml-[20px] mt-[13px] flex h-[50px] w-[152px] flex-none justify-between border-x border-black pl-[13px] pr-[16px] pt-[6px] text-left leading-[19px]">
          <span className="w-[80px]">Test Institution</span>
          <Svg w={10} h={7} stroke="none" fill="#fff" className="mt-[6px]"><path d="M0 0h10L5 7z" /></Svg>
        </button>
        <button aria-label="Close" className="ml-[25px] mr-[24px] mt-[28px] h-[16px] flex-none"><Svg w={15} h={15} strokeWidth="2" stroke="#c9c9cc"><path d="m1 1 13 13M14 1 1 14" /></Svg></button>
      </header>

      <div className="flex h-[50px] flex-none items-center bg-[#f4f4f4] text-[#555]" role="toolbar">
        <div className="flex w-[251px] flex-none items-center pl-[11px]"><button aria-label="Undo"><BackIcon /></button></div>
        <div className="my-[3px] w-[2px] flex-none self-stretch bg-[#c9c9c9]" />
        <div className="flex w-[160px] flex-none items-center gap-[18px] pl-[72px]">
          <Tool label="New worksheet"><Svg w={18} h={22} strokeWidth="1.400"><rect x="1" y="1" width="16" height="19" /></Svg></Tool>
          <Tool label="Duplicate sheet"><Svg w={18} h={20} strokeWidth="1.400"><rect x="1" y="1" width="16" height="17" /></Svg></Tool>
        </div>
        <div className="flex flex-none self-stretch">
          <Sep />
          <div className="flex w-[180px] items-center pl-[16px]">
            <Tool label="Swap rows and columns" className="w-[23px]"><SwapIcon /></Tool>
            <Tool label="Sort ascending" className="ml-[17px] w-[23px] text-[#bcbcbc]"><SortIcon widths={[5, 9, 13]} /></Tool>
            <Tool label="Sort descending" className="ml-[17px] w-[23px] text-[#bcbcbc]"><SortIcon widths={[13, 9, 5]} /></Tool>
            <Tool label="Totals" className="ml-[17px]"><SigmaIcon /><Caret /></Tool>
          </div>
          <Sep />
          <div className="flex w-[194px] items-center pl-[9px]">
            <Tool label="Highlight" className="w-[41px] bg-[#e4e4e4]"><PenIcon /><Caret className="-ml-[2px]" /></Tool>
            <Tool label="Show mark labels" className="ml-[9px]"><TextBoxIcon /></Tool>
            <Tool label="Format workbook" className="ml-[20px]"><BrushIcon /></Tool>
            <Tool label="Fit" className="ml-[17px]"><FitIcon /><Caret /></Tool>
          </div>
          <Sep />
          <div className="flex w-[70px] items-center pl-[15px]"><Tool label="Show or hide cards"><CardsIcon /><Caret className="ml-px" /></Tool></div>
          <Sep />
          <div className="flex items-center pl-[16px]"><Tool label="Download"><DownloadIcon /></Tool></div>
        </div>
        <button className="ml-auto mr-[30px] flex items-center gap-[10px] text-[#333]"><ShowMeIcon />Show Me</button>
      </div>

      <div className="flex min-h-0 flex-1">
        <aside className="flex w-[250px] flex-none flex-col border-r border-t border-[#d0d0d0] bg-white">
          <div className="flex h-[34px] flex-none items-center border-b border-[#d0d0d0] pl-[15px] font-medium">Data</div>
          <div className="flex h-[41px] flex-none items-center gap-[6px] border-b border-[#d0d0d0] pl-[6px] text-[#555]"><DatabaseIcon /><span className="text-[#333]">orcid</span></div>
          <label className="mx-[8px] mt-[15px] flex h-[30px] flex-none items-center gap-[12px] border border-[#c4c4c4] pl-[6px] text-[#666]"><SearchIcon /><input type="search" aria-label="Search fields" placeholder="Search" className="w-full bg-transparent text-[15px] outline-none placeholder:text-[#a8a8a8]" /></label>
          <div className="mt-[6px] flex min-h-0 flex-1">
            <div className="flex flex-1 flex-col pb-[5px] pt-[6px]">
              <ul className="flex min-h-0 flex-[13] flex-col text-[#4488a8]">{FIELDS.map((f, i) => <Field key={i} kind={f[0]} name={f[1]} state={f[2]} />)}</ul>
              <hr className="ml-[23px] mr-[8px] mt-px flex-none border-[#c8c8c8]" />
              <ul className="mt-[2px] flex min-h-0 flex-[7] flex-col text-[#00a376]">{MEASURES.map((f) => <Field key={f[1]} kind={f[0]} name={f[1]} state={f[2]} />)}</ul>
            </div>
            <div className="flex w-[21px] flex-none flex-col items-center bg-[#e2e2e2]">
              <span className="flex h-[22px] items-center text-[#444]"><Svg w={11} h={7} strokeWidth="2"><path d="m1 6 4.500-4.500L10 6" /></Svg></span>
              <div className="min-h-0 flex-[163]" /><div className="min-h-0 w-full flex-[335] bg-[#cbcbcb]" />
              <span className="flex h-[21px] w-full items-center justify-center bg-[#f2f2f2] text-[#444]"><Svg w={13} h={9} strokeWidth="2.500"><path d="m1.500 1.500 5 5 5-5" /></Svg></span>
            </div>
          </div>
        </aside>

        <div className="ml-[8px] flex w-[222px] flex-none flex-col gap-[8px] overflow-hidden">
          <Card title="Pages" className="h-[70px] flex-none" />
          <Card title="Filters" className="h-[198px] flex-none">
            <ul className="flex flex-col gap-1 pr-[7px] pt-2">
              <Pill green>Latitude (generated)</Pill>
              <Pill green>Longitude (generate...</Pill>
              <Pill trailing={<SetIcon />}>Action (Org2)</Pill>
              <Pill icon={<span className="ml-[2px]"><ContextIcon /></span>}>Org2</Pill>
              <Pill>Doi</Pill>
            </ul>
          </Card>
          <Card title="Marks" className="flex-none pb-3">
            <div className="px-[7px]">
              <div className="relative mt-[6px] flex h-[28px] items-center border border-[#a9a9a9] text-[#666]">
                <span className="absolute left-[7px]"><Svg w={16} h={16} strokeWidth="1.300"><circle cx="8" cy="8" r="7" /></Svg></span>
                <select aria-label="Mark type" className="h-full w-full appearance-none bg-transparent pl-[32px] text-[16px] outline-none"><option>Automatic</option></select>
                <span className="pointer-events-none absolute right-0 flex h-full w-[23px] items-center justify-center border-l border-[#d0d0d0]"><Svg w={10} h={7} stroke="none" fill="#555"><path d="M0 0h10L5 7z" /></Svg></span>
              </div>
              <div className="mt-[7px] grid grid-cols-3 gap-x-[10px] gap-y-[7px]">
                <MarkButton icon={<ColorIcon />}>Color</MarkButton>
                <MarkButton icon={<SizeIcon />}>Size</MarkButton>
                <MarkButton icon={<LabelIcon />}>Label</MarkButton>
                <MarkButton icon={<DetailIcon />}>Detail</MarkButton>
                <MarkButton icon={<BubbleIcon />}>Tooltip</MarkButton>
              </div>
            </div>
            <ul className="mt-[15px] flex flex-col gap-1 pr-[7px]">
              <Pill green icon={<SizeIcon />}>CNTD(Doi (copy))</Pill>
              {["City2", "Country2", "Region2", "City2"].map((p, i) => <Pill key={i} icon={<DetailIcon />}>{p}</Pill>)}
              <Pill icon={<BubbleIcon />}>ATTR(Org1)</Pill>
            </ul>
          </Card>
        </div>

        <main className="ml-[8px] mr-[7px] flex min-w-0 flex-1 flex-col gap-[7px] pb-[7px]">
          <Shelf label="Columns" pill="Longitude (generated)" icon={<Svg w={14} h={15} stroke="none" fill="#555"><path d="M1 0h2v3H1zM6 0h2v3H6zM11 0h2v3h-2zM1 4h2v11H1zM6 4h2v11H6zM11 4h2v11h-2z" /></Svg>} />
          <Shelf label="Rows" pill="Latitude (generated)" icon={<Svg w={15} h={14} stroke="none" fill="#555"><path d="M0 0h2v3H0zM0 5h2v3H0zM0 10h2v3H0zM4 0h11v3H4zM4 5h11v3H4zM4 10h11v3H4z" /></Svg>} />
          <div className="flex min-h-0 flex-1 gap-[7px] pt-px">
            <section className="flex min-w-0 flex-1 flex-col rounded-[1px] border border-[#d0d0d0] bg-white pb-[5px] pl-[3px] pr-[5px] pt-[3px]">
              <h2 className="flex h-[48px] flex-none items-center pl-[6px] font-['Open_Sans',sans-serif] text-[22px] font-light italic leading-7 text-[#333]">Click on a city to see a list of institutions below (if available).</h2>
              <div className="relative min-h-0 flex-1 overflow-hidden border border-[#e2e2e2]">
                <WorldMap />
                <button aria-label="Search map" className="absolute left-[12px] top-[12px] flex h-[34px] w-[34px] items-center justify-center rounded-[1px] border border-[#c0c0c0] bg-[#f5f5f5] text-[#777] shadow-[1px_3px_0_#e6e6e6]"><SearchIcon /></button>
                <div className="absolute left-[12px] top-[63px] flex w-[34px] flex-col items-center rounded-[1px] border border-[#c0c0c0] bg-[#f5f5f5] pt-[3px] text-[#777] shadow-[1px_3px_0_#e6e6e6]">
                  <button aria-label="Zoom in" className="flex h-[27px] items-center"><Svg w={13} h={13} strokeWidth="2.400"><path d="M6.500 0v13M0 6.500h13" /></Svg></button>
                  <button aria-label="Zoom out" className="flex h-[27px] items-center"><Svg w={13} h={13} strokeWidth="2.400"><path d="M0 6.500h13" /></Svg></button>
                  <button aria-label="Reset view" className="flex h-[30px] items-center"><Svg w={19} h={19} strokeWidth="1.400"><path d="m1 10 8.500-8.500L18 10M3 8.500V18h13V8.500M7.500 18v-7h4v7" /></Svg></button>
                  <span className="h-px w-[25px] bg-[#ddd]" />
                  <button aria-label="Map tools" className="flex h-[36px] items-center"><Svg w={8} h={13} stroke="none" fill="currentColor"><path d="m0 0 8 6.500L0 13z" /></Svg></button>
                </div>
                <p className="absolute bottom-0 left-[2px] flex gap-px bg-[#fafafa] px-[3px] text-[15px] leading-[19px] text-[#555]"><span>© 2022 Mapbox</span><span>© OpenStreetMap</span></p>
              </div>
            </section>
            <div className="flex w-[368px] flex-none flex-col gap-[8px] text-[#333]">
              <section className="flex h-[70px] flex-col border border-[#d0d0d0] bg-white px-[8px] pt-[7px]">
                <label htmlFor="doi">Search for a DOI</label>
                <input id="doi" className="mt-[4px] h-[25px] rounded-[1px] border border-[#a9a9a9] outline-none" />
              </section>
              <section className="h-[83px] border border-[#d0d0d0] bg-white pl-[4px] pt-[4px]">
                <h2>Legend</h2>
                <ul className="mt-[4px]">
                  {[[1, 13], [2, 18]].map(([n, r]) => (
                    <li key={n} className="mb-[2px] flex h-[23px] items-center gap-[5px]"><Svg w={41} h={23}><circle cx="22" cy="11.500" r={r} fill="#d5d5d5" stroke="#b5b5b5" strokeWidth="1.500" /></Svg>{n}</li>
                  ))}
                </ul>
              </section>
              <section className="flex h-[66px] flex-col border border-[#d0d0d0] bg-white px-[8px] pt-[7px]">
                <label htmlFor="city">Highlight a City</label>
                <div className="flex h-[25px] items-center rounded-[1px] border border-[#cfcfcf] pr-[5px] text-[#666]">
                  <input id="city" placeholder="Highlight City2" className="w-full bg-transparent pl-[4px] text-[15px] outline-none placeholder:text-[#c4c4c4]" /><SearchIcon size={12} />
                </div>
              </section>
            </div>
          </div>
        </main>
      </div>

      <div className="flex h-[39px] flex-none border-y border-[#c6c6c6] bg-[#e6e6e6] text-[#666]" role="tablist">
        <button role="tab" className="flex w-[158px] flex-none items-center gap-[6px] border-r border-[#c6c6c6] pb-[5px] pl-[13px]"><CylinderIcon />Data Source</button>
        {TABS.map(([t, w, c], i) => (
          <button key={t} role="tab" aria-selected={i === 3} className={`flex flex-none items-center gap-[6px] whitespace-nowrap border-b-[3px] border-r border-r-[#c6c6c6] pb-[2px] ${w} ${c} ${i === 3 ? "justify-center bg-[#fafafa] font-bold text-[#333]" : "pl-[12px]"}`}>{i !== 3 && <GridIcon />}{t}</button>
        ))}
        <button role="tab" className="flex w-[160px] flex-none items-center gap-[6px] border-r border-[#c6c6c6] pb-[5px] pl-[12px]"><BookIcon />Full visualization</button>
        <button aria-label="New worksheet tab" className="flex w-[40px] flex-none items-center justify-center border-r border-[#c6c6c6] pb-1"><Plus><path d="M8 14H1V1h13v6M5 10.500v-2M7.500 10.500V5M10 10.500V7" /></Plus></button>
        <button aria-label="New dashboard tab" className="flex w-[40px] flex-none items-center justify-center border-r border-[#c6c6c6] pb-1"><Plus><path d="M8 13H1V1h13v6M7.500 1v12M1 7h13" /></Plus></button>
        <button aria-label="New story tab" className="flex w-[40px] flex-none items-center justify-center border-r border-[#c6c6c6] pb-1"><Plus><path d="M7.500 15 1 12V1l6.500 3L14 1v6M7.500 4v11" /></Plus></button>
      </div>

      <footer className="flex h-[16px] flex-none gap-[13px] bg-[#ebebeb] pl-[12px] text-[13px] leading-[18px] text-[#333]"><span>17 marks</span><span>1 row by 1 column</span><span>SUM of CNTD(Doi (copy)): 19</span></footer>

      <div role="menu" className="absolute left-[52px] top-[42px] flex w-[190px] flex-col bg-white pb-[6px] pt-[7px] shadow-[4px_8px_24px_rgba(0,0,0,0.4)]">
        {MENU.map((group, g) => (
          <React.Fragment key={g}>
            {g > 0 && <hr className="mx-[15px] mb-[11px] mt-[11px] border-[#e0e0e0]" />}
            {group.map(([t, s]) => (
              <button key={t} role="menuitem" disabled={s === "disabled"} className={"mx-2 flex h-[29px] items-center justify-between whitespace-nowrap pl-[15px] pr-[16px] text-left " + (s === "bold" ? "font-bold text-black" : s === "active" ? "bg-[#f4f4f4]" : s === "disabled" ? "text-[#aaa]" : "")}>
                {t}{s === "sub" && <Svg w={6} h={9} stroke="none" fill="#555"><path d="m0 0 6 4.500L0 9z" /></Svg>}
              </button>
            ))}
          </React.Fragment>
        ))}
      </div>
      <Svg w={176} h={98} className="pointer-events-none absolute left-[226px] top-[66px]" stroke="none" fill="#ff8127"><path d="M0 48 87 1v25h88v47H87v24z" /></Svg>
    </div>
  );
}
